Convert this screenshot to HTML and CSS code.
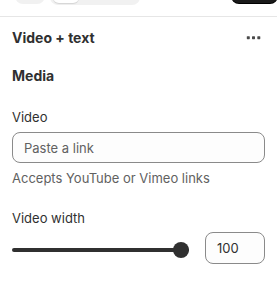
FILE: index.html
```html
<!DOCTYPE html>
<html lang="en">
<head>
<meta charset="utf-8">
<title>Video + text</title>
<link rel="stylesheet" href="styles.css">
</head>
<body>
<div class="topbar">
  <div class="pill-a"></div>
  <div class="seg">
    <div class="seg-on"></div>
  </div>
  <div class="spacer"></div>
  <div class="btn-dark"></div>
</div>
<div class="panel">
  <div class="header">
    <h2 class="title">Video + text</h2>
    <svg class="dots" width="20" height="20" viewBox="0 0 20 20" aria-hidden="true">
      <rect x="3.8" y="8.2" width="3" height="3" rx="0.6" fill="#4a4a4a"/>
      <rect x="9" y="8.2" width="3" height="3" rx="0.6" fill="#4a4a4a"/>
      <rect x="14.3" y="8.2" width="3" height="3" rx="0.6" fill="#4a4a4a"/>
    </svg>
  </div>
  <h3 class="section">Media</h3>
  <label class="label" for="video">Video</label>
  <input class="field" id="video" type="text" placeholder="Paste a link">
  <p class="help">Accepts YouTube or Vimeo links</p>
  <label class="label label-width" for="vw">Video width</label>
  <div class="range-row">
    <input class="range" id="vw" type="range" min="0" max="100" value="100">
    <input class="num" type="text" value="100">
  </div>
</div>
</body>
</html>
```

FILE: styles.css
```css
* { box-sizing: border-box; }
html, body { margin: 0; padding: 0; background: #ffffff; }
body {
  font-family: Inter, "Noto Sans", sans-serif;
  color: #303030;
  font-size: 13px;
  line-height: 20px;
  overflow: hidden;
}
.topbar {
  height: 17px;
  border-bottom: 1px solid #e6e6e6;
  display: flex;
  align-items: flex-start;
  padding-left: 15px;
}
.pill-a {
  width: 30px;
  height: 24px;
  margin-top: -20px;
  border-radius: 8px;
  background: #f1f1f1;
}
.seg {
  width: 90px;
  height: 25px;
  margin-top: -20px;
  margin-left: 5px;
  border-radius: 8px;
  background: #f1f1f1;
  padding: 0 3px;
}
.seg-on {
  width: 26px;
  height: 23px;
  border-radius: 6px;
  background: #ffffff;
  box-shadow: 0 1px 1px rgba(0,0,0,0.12);
}
.spacer { flex: 1; }
.btn-dark {
  width: 47px;
  height: 23px;
  margin-top: -20px;
  margin-right: -1px;
  border-radius: 8px;
  background: #1a1a1a;
  box-shadow: 0 1px 0 #000;
}
.panel { padding: 0 12px; }
.header {
  display: flex;
  align-items: center;
  justify-content: space-between;
  padding-top: 11px;
}
.title, .section {
  margin: 0;
  font-size: 14px;
  line-height: 20px;
  font-weight: 650;
}
.dots { display: block; margin-right: 2px; margin-top: -1px; }
.section { margin-top: 18px; }
.label { display: block; margin-top: 21px; }
.label-width { margin-top: 20px; }
.field, .num {
  display: block;
  font: inherit;
  color: #303030;
  height: 31px;
  border: 1px solid #8a8a8a;
  border-radius: 8px;
  background: #fdfdfd;
  padding: 0 11px;
  outline: none;
}
.field {
  width: 100%;
  margin-top: 5px;
}
.field::placeholder { color: #616161; opacity: 1; }
.help { margin: 5px 0 0; color: #616161; }
.range-row {
  display: flex;
  align-items: center;
  gap: 16px;
  margin-top: 4px;
}
.range {
  -webkit-appearance: none;
  appearance: none;
  flex: 1;
  margin: 3px 0 0;
  height: 16px;
  background: transparent;
}
.range::-webkit-slider-runnable-track {
  height: 4px;
  border-radius: 2px;
  background: #303030;
}
.range::-webkit-slider-thumb {
  -webkit-appearance: none;
  appearance: none;
  width: 16px;
  height: 16px;
  margin-top: -6px;
  border-radius: 50%;
  background: #303030;
  border: none;
}
.num {
  width: 60px;
  height: 32px;
  flex: none;
}
```
